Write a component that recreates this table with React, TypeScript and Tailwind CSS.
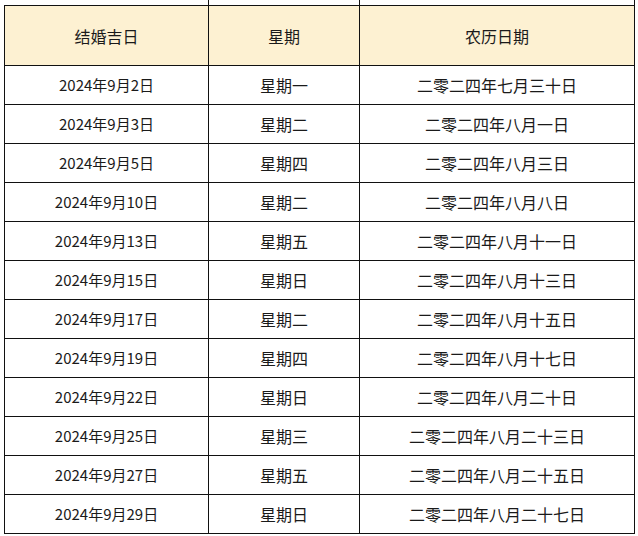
const rows: [string, string, string][] = [
  ['2024年9月2日', '星期一', '二零二四年七月三十日'],
  ['2024年9月3日', '星期二', '二零二四年八月一日'],
  ['2024年9月5日', '星期四', '二零二四年八月三日'],
  ['2024年9月10日', '星期二', '二零二四年八月八日'],
  ['2024年9月13日', '星期五', '二零二四年八月十一日'],
  ['2024年9月15日', '星期日', '二零二四年八月十三日'],
  ['2024年9月17日', '星期二', '二零二四年八月十五日'],
  ['2024年9月19日', '星期四', '二零二四年八月十七日'],
  ['2024年9月22日', '星期日', '二零二四年八月二十日'],
  ['2024年9月25日', '星期三', '二零二四年八月二十三日'],
  ['2024年9月27日', '星期五', '二零二四年八月二十五日'],
  ['2024年9月29日', '星期日', '二零二四年八月二十七日'],
];

const cols = 'grid grid-cols-[204px_151px_275px]';
const cell = 'flex items-center justify-center border-r border-b border-[#111]';

export default function App() {
  return (
    <div
      className="h-[536px] w-[638px] overflow-hidden bg-white text-[16px] text-[#1a1a1a]"
      style={{ fontFamily: '"Noto Sans CJK SC", "Noto Sans", sans-serif' }}
    >
      {/* tail of the previous row */}
      <div className={`${cols} ml-1 h-[5px] pl-px`}>
        <div className="border-r border-[#111]" />
        <div className="border-r border-[#111]" />
        <div className="border-r border-[#111]" />
      </div>
      <div className="ml-1 w-[631px] border-l border-t border-[#111]">
        <div className={`${cols} h-[60px] bg-[#fdf1d2]`}>
          <div className={cell}>结婚吉日</div>
          <div className={cell}>星期</div>
          <div className={cell}>农历日期</div>
        </div>
        {rows.map((r, i) => (
          <div key={i} className={`${cols} h-[39px]`}>
            <div className={`${cell} text-[15px]`}>{r[0]}</div>
            <div className={cell}>{r[1]}</div>
            <div className={cell}>{r[2]}</div>
          </div>
        ))}
      </div>
    </div>
  );
}
